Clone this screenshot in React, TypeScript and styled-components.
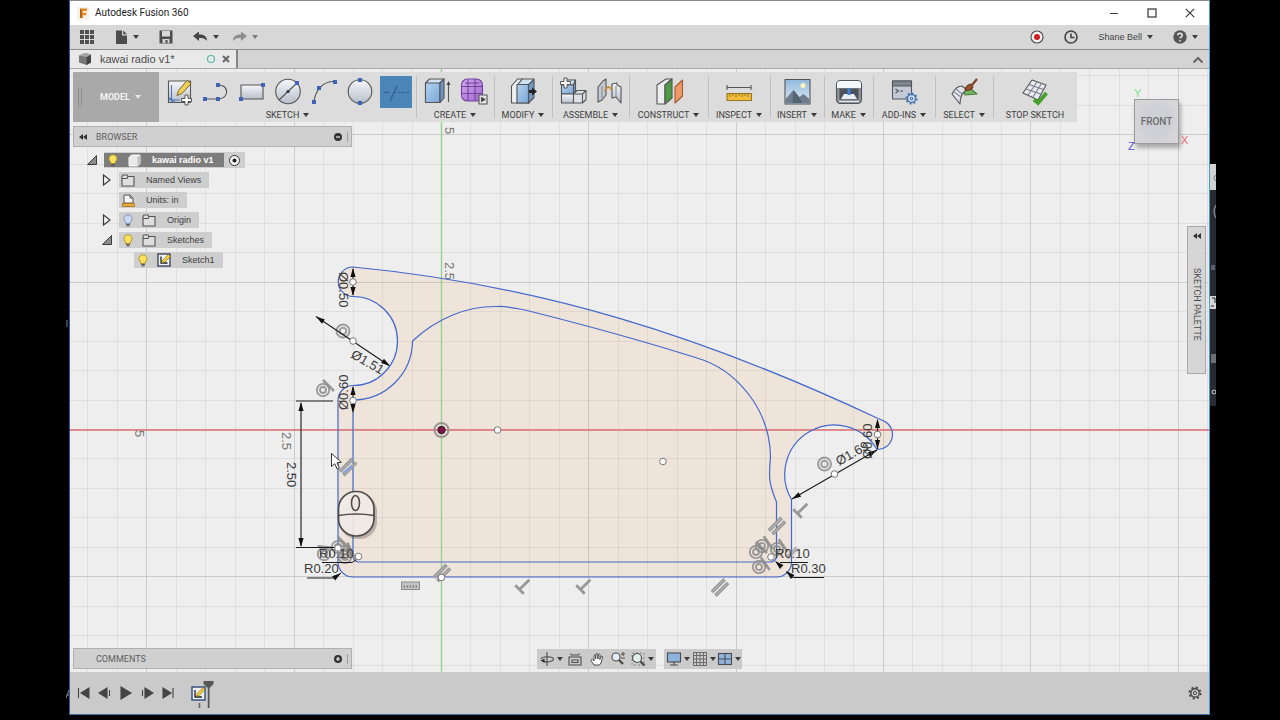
import React from 'react';
import styled, { createGlobalStyle } from 'styled-components';

const UI = '"Liberation Sans", Arial, sans-serif';
const CAPS = 'Roboto, "Liberation Sans", sans-serif';

const GlobalStyle = createGlobalStyle`
  *, *::before, *::after { box-sizing: border-box; }
  body { margin: 0; background: #000; font-family: ${UI}; color: #444; }
  button { font: inherit; color: inherit; background: none; border: 0; padding: 0; margin: 0; cursor: default; }
  ul { list-style: none; margin: 0; padding: 0; }
  svg { display: block; flex: none; }
`;

const Desktop = styled.div`
  display: flex;
  min-height: 100vh;
  padding-bottom: 5px;
  background: #000;
`;
const Gutter = styled.div<{ $w: number; $top: number; $end?: boolean }>`
  flex: none;
  width: ${p => p.$w}px;
  padding-top: ${p => p.$top}px;
  display: flex;
  justify-content: ${p => (p.$end ? 'flex-end' : 'flex-start')};
  align-items: flex-start;
`;
const AppWindow = styled.main`
  flex: 1;
  min-width: 0;
  display: flex;
  flex-direction: column;
  border: 1px solid #3c6ea8;
  border-top-color: #8a8a8a;
  border-left-color: #2c56a0;
  border-right-color: #4a9bdc;
  background: #eee;
`;

const TitleBar = styled.header`
  height: 24px;
  display: flex;
  align-items: center;
  background: #fff;
  padding: 0 12px 0 7px;
`;
const Title = styled.h1`
  flex: 1;
  margin: 0 0 0 6px;
  font: 400 10px/14px ${CAPS};
  color: #222;
`;
const WindowButtons = styled.div`
  display: flex;
  gap: 24px;
`;
const IconButton = styled.button<{ $w?: number }>`
  display: flex;
  align-items: center;
  justify-content: center;
  gap: 5px;
  min-width: ${p => p.$w ?? 14}px;
  height: 20px;
`;

const QuickBar = styled.nav`
  height: 25px;
  display: flex;
  align-items: center;
  background: #d7d7d7;
  border-bottom: 1px solid #8f8f8f;
  padding: 0 11px 0 9px;
  font-size: 9px;
`;
const QuickLeft = styled.div`
  flex: 1;
  display: flex;
  gap: 20px;
`;
const UndoPair = styled.div`
  display: flex;
  gap: 13px;
`;
const QuickRight = styled.div`
  display: flex;
  align-items: center;
  gap: 20px;
`;
const caretColors = { dark: '#3c3c3c', soft: '#7a7a7a', light: '#e8e8e8' };
const Caret = styled.span<{ $tone?: keyof typeof caretColors }>`
  width: 0;
  height: 0;
  flex: none;
  border: solid transparent;
  border-width: 4px 3px 0;
  border-top-color: ${p => caretColors[p.$tone ?? 'dark']};
`;

const TabStrip = styled.div`
  height: 19px;
  display: flex;
  align-items: stretch;
  justify-content: space-between;
  background: #d4d4d4;
  border-bottom: 1px solid #a9a9a9;
  padding-right: 4px;
`;
const Tab = styled.div`
  width: 168px;
  display: flex;
  align-items: center;
  background: #e9e9e9;
  border-right: 2px solid #858585;
  padding: 0 0 0 8px;
`;
const TabName = styled.span`
  flex: 1;
  margin-left: 8px;
  font-size: 11px;
  line-height: 16px;
  color: #4b4b4b;
`;

const Viewport = styled.section`
  position: relative;
  flex: 1;
  display: flex;
  flex-direction: column;
  padding: 3px 3px 3px;
  background: #eee;
  overflow: hidden;
`;
const Drawing = styled.svg`
  position: absolute;
  inset: 0;
  width: 100%;
  height: 100%;
`;
const Toolbar = styled.div`
  position: relative;
  align-self: flex-start;
  display: flex;
  height: 50px;
  background: #dcdcdc;
  font-family: ${CAPS};
`;
const Workspace = styled.button`
  width: 86px;
  display: flex;
  align-items: center;
  gap: 5px;
  padding-left: 5px;
  background: #a9a9a9;
  color: #f4f4f4;
  font: 700 9px/12px ${CAPS};
`;
const Grip = styled.span`
  width: 4px;
  height: 20px;
  margin-right: 13px;
  border: solid #8e8e8e;
  border-width: 0 1px;
`;
const Group = styled.div<{ $w: number }>`
  width: ${p => p.$w}px;
  padding: 4px 0 1px;
  display: flex;
  flex-direction: column;
  align-items: center;
  justify-content: space-between;
  & + & { background: linear-gradient(#c0c0c0, #c0c0c0) left center / 1px 42px no-repeat; }
`;
const Tools = styled.div`
  display: flex;
  gap: 4px;
`;
const Tool = styled.button<{ $on?: boolean }>`
  width: 32px;
  height: 32px;
  background: ${p => (p.$on ? '#4b84b6' : 'transparent')};
`;
const GroupLabel = styled.button`
  display: flex;
  align-items: center;
  gap: 4px;
  font-size: 9px;
  line-height: 12px;
  color: #404040;
  white-space: nowrap;
`;

const Middle = styled.div`
  position: relative;
  flex: 1;
  display: flex;
  justify-content: space-between;
  align-items: flex-start;
  padding-top: 4px;
`;
const PanelHeader = styled.div`
  width: 279px;
  height: 21px;
  display: flex;
  align-items: center;
  padding: 0 2px 0 4px;
  background: #d0d0d0;
  border: 1px solid #b0b0b0;
  font: 400 9px/12px ${CAPS};
  color: #5e5e5e;
`;
const PanelName = styled.span`
  flex: 1;
  margin-left: 8px;
`;
const PanelLead = styled.span`
  width: 10px;
`;
const Tree = styled.ul`
  padding-top: 3px;
  font-size: 9px;
  line-height: 12px;
`;
const TreeRow = styled.li<{ $level: number }>`
  height: 20px;
  display: flex;
  align-items: center;
  gap: 6px;
  padding-left: ${p => 13 + p.$level * 15}px;
`;
const Twisty = styled.button`
  width: 12px;
  height: 14px;
`;
const Chip = styled.span<{ $root?: boolean }>`
  height: 16px;
  display: flex;
  align-items: center;
  background: #cecece;
  color: #404040;
  padding-right: ${p => (p.$root ? 4 : 8)}px;
`;
const RootName = styled.span`
  height: 14px;
  display: flex;
  align-items: center;
  padding-right: 10px;
  margin-right: 4px;
  background: #7d7d7d;
  color: #fff;
  font-weight: 700;
`;
const Slot = styled.span`
  width: 18px;
  margin-right: 3px;
  display: flex;
  justify-content: center;
`;
const NodeName = styled.span`
  margin-left: 6px;
`;

const Palette = styled.button`
  width: 19px;
  margin-top: 100px;
  padding: 5px 0 32px;
  display: flex;
  flex-direction: column;
  align-items: center;
  gap: 28px;
  background: #d6d6d6;
  border: 1px solid #aaa;
`;
const PaletteName = styled.span`
  writing-mode: vertical-rl;
  font: 400 9px/12px ${CAPS};
  color: #4a4a4a;
`;

const ViewCube = styled.div`
  position: absolute;
  right: 30px;
  top: 30px;
  width: 45px;
  height: 45px;
  display: flex;
  align-items: center;
  justify-content: center;
  background: radial-gradient(closest-side, #cfcfd6 70%, #d6d6d9);
  border: 1px solid #9a9a9a;
  box-shadow: 2px 4px 4px rgba(0, 0, 0, 0.28);
  font: 500 10px/14px ${CAPS};
  color: #6d6d6d;
`;
const AxisName = styled.span<{ $x: number; $y: number; $c: string }>`
  position: absolute;
  left: ${p => p.$x}px;
  top: ${p => p.$y}px;
  font: 400 11px/12px ${UI};
  color: ${p => p.$c};
`;

const BottomRow = styled.div`
  position: relative;
  display: grid;
  grid-template-columns: 1fr auto 1fr;
  align-items: center;
`;
const NavBars = styled.div`
  display: flex;
  gap: 8px;
`;
const NavBar = styled.div`
  height: 20px;
  display: flex;
  align-items: center;
  background: #cbcbcb;
  padding: 0 1px;
`;
const NavButton = styled.button<{ $w: number }>`
  width: ${p => p.$w}px;
  display: flex;
  align-items: center;
  justify-content: center;
  gap: 2px;
`;

const Timeline = styled.footer`
  height: 42px;
  display: flex;
  align-items: center;
  background: #cacaca;
  padding: 0 7px;
`;
const Playback = styled.div`
  display: flex;
  gap: 7px;
`;
const History = styled.div`
  flex: 1;
  padding-left: 16px;
`;

/* ---------- toolbar glyphs ---------- */

const Defs = styled.svg`
  position: absolute;
`;
const Gradients = () => (
  <Defs width="0" height="0" aria-hidden>
    <defs>
      <linearGradient id="steel" x1="0" y1="0" x2="0" y2="1">
        <stop offset="0" stopColor="#f6f7fa" />
        <stop offset="1" stopColor="#b7bfcb" />
      </linearGradient>
      <linearGradient id="blue" x1="0" y1="0" x2="1" y2="1">
        <stop offset="0" stopColor="#b4d2f0" />
        <stop offset="1" stopColor="#7ba6d6" />
      </linearGradient>
      <linearGradient id="violet" x1="0" y1="0" x2="1" y2="1">
        <stop offset="0" stopColor="#d3a8ee" />
        <stop offset="1" stopColor="#a268cf" />
      </linearGradient>
      <linearGradient id="sky" x1="0" y1="0" x2="0" y2="1">
        <stop offset="0" stopColor="#8fb9dc" />
        <stop offset="1" stopColor="#e2edf4" />
      </linearGradient>
    </defs>
  </Defs>
);

const Dot = ({ x, y }: { x: number; y: number }) => (
  <rect x={x - 2} y={y - 2} width="4" height="4" fill="#3d63b4" stroke="none" />
);
const Ico = ({ children }: { children: React.ReactNode }) => (
  <svg width="32" height="32" viewBox="0 0 32 32" fill="none" stroke="#555" strokeWidth="1.1" strokeLinejoin="round">
    {children}
  </svg>
);

const icons: Record<string, React.ReactNode> = {
  newSketch: (
    <Ico>
      <rect x="4.500" y="5" width="22" height="21.500" fill="url(#steel)" />
      <path d="M7.500 9v15h8" stroke="#5277b5" />
      <path d="M5 22l5 4" stroke="#5277b5" strokeWidth="2" />
      <path d="M23 4.500l4 3-9 10-5 2 1.500-5z" fill="#f2cf55" stroke="#7a642a" strokeWidth="1" />
      <path d="M21 19h3v3.500h3.500v3h-3.500v3.500h-3v-3.500h-3.500v-3h3.500z" fill="#fff" strokeWidth="1" />
    </Ico>
  ),
  line: (
    <Ico>
      <path d="M5 23H18M18 9c11-1 12 14 0 14" />
      <Dot x={5} y={23} /><Dot x={18} y={23} /><Dot x={18} y={9} />
    </Ico>
  ),
  rect: (
    <Ico>
      <rect x="5" y="9" width="22" height="14" fill="url(#steel)" />
      <Dot x={5} y={23} /><Dot x={27} y={9} />
    </Ico>
  ),
  circle: (
    <Ico>
      <circle cx="16" cy="15.500" r="12.300" fill="url(#steel)" />
      <path d="M7 24L25 7" />
      <Dot x={25} y={7} /><circle cx="16" cy="15.500" r="1.600" fill="#333" stroke="none" />
    </Ico>
  ),
  arc: (
    <Ico>
      <path d="M6 26C7 14 15 5 27 5.500" />
      <Dot x={6} y={26} /><Dot x={11} y={12} /><Dot x={27} y={6} />
    </Ico>
  ),
  circle2: (
    <Ico>
      <circle cx="16" cy="15.500" r="11.800" fill="url(#steel)" />
      <Dot x={16} y={4} /><Dot x={16} y={27} />
    </Ico>
  ),
  trim: (
    <Ico>
      <path d="M4 16.500h5M10 25l7-15" stroke="#2b5f92" />
      <path d="M13 16.500h16" stroke="#2b5f92" strokeDasharray="3 1.500" />
    </Ico>
  ),
  extrude: (
    <Ico>
      <path d="M4.500 7l4-4H23l-4 4v19.500H4.500z" fill="#cfe2f5" />
      <rect x="4.500" y="7" width="14.500" height="19.500" fill="url(#blue)" />
      <path d="M19 7l4-4v19l-4 4.500z" fill="#6e93c2" />
      <path d="M27.500 26V8" /><path d="M27.500 5l-2 4h4z" fill="#444" stroke="none" />
    </Ico>
  ),
  form: (
    <Ico>
      <rect x="4.500" y="3" width="21" height="22" rx="6" fill="url(#violet)" stroke="#75429f" />
      <path d="M11 4v21M18 3v22M4.500 10.500h21M4.500 17.500h21M8 7h14" stroke="#75429f" />
      <rect x="22" y="19" width="8" height="9" fill="#e4e4e4" />
      <path d="M24.500 21.500l3.500 2-3.500 2z" fill="#333" />
    </Ico>
  ),
  pressPull: (
    <Ico>
      <path d="M4.500 10l6-7h5l-5 6v18h-6z" fill="#eef0f4" />
      <path d="M10.500 9l5-6H27l-5 6v18H10.500z" fill="#cfe2f5" />
      <rect x="10" y="8.500" width="11.500" height="18.500" fill="url(#blue)" />
      <path d="M21.500 8.500L27 3.500v18L21.500 27z" fill="#7198c8" />
      <path d="M22 14h3v-2.500l5 4-5 4V17h-3z" fill="#222" stroke="none" />
    </Ico>
  ),
  component: (
    <Ico>
      <path d="M5 9l3-5h10.500l-2 5z" fill="#cfe2f5" />
      <rect x="4.500" y="9" width="12" height="9" fill="url(#blue)" />
      <path d="M16.500 9l2-5v11l-2 3z" fill="#7da2cf" />
      <rect x="4.500" y="18" width="12" height="9" fill="url(#steel)" />
      <path d="M16.500 18l3.500-3.500h9v9l-3.500 3.500h-9z" fill="#dde1e8" />
      <path d="M25.500 27v-9h-9M25.500 18l3.500-3.500" />
      <path d="M7 2h3v3.500h3.500v3H10V12H7V8.500H3.500v-3H7z" fill="#fff" strokeWidth="1" />
    </Ico>
  ),
  joint: (
    <Ico>
      <path d="M5 11l5-6 3-2v16l-4 5-4 2z" fill="#c3c8d1" />
      <path d="M9 10v14" stroke="#868c98" />
      <path d="M28 11l-4-2V7l-5 1v14l4-1 5 6z" fill="url(#steel)" />
      <path d="M23 10v11" stroke="#868c98" />
      <path d="M12 15c2-5 4-5 7-1" stroke="#c58b3a" strokeWidth="2" />
    </Ico>
  ),
  plane: (
    <Ico>
      <path d="M4 9l9-6h6l-7 6v19H4z" fill="#eceef2" />
      <path d="M12 9l7-6v19l-7 6z" fill="#4e9a46" />
      <path d="M22 11l7.500-7v16L22 27z" fill="#eb9a68" stroke="#a65a30" />
    </Ico>
  ),
  measure: (
    <Ico>
      <path d="M4 11.500h24M4 9v5M28 9v5" />
      <rect x="4" y="17.500" width="24.500" height="7" fill="#f0be3c" stroke="#9c7420" />
      <path d="M7 18v3M10 18v2M13 18v3M16 18v2M19 18v3M22 18v2M25 18v3" stroke="#9c7420" strokeWidth="1" />
    </Ico>
  ),
  image: (
    <Ico>
      <rect x="4" y="3.500" width="25" height="24.500" fill="url(#sky)" />
      <path d="M4.500 23l8-9 6 7 4-3 6 5v4.500h-24z" fill="#6e7c8e" stroke="none" />
      <path d="M12.500 14l6 8 3 5h-10z" fill="#566373" stroke="none" />
      <circle cx="22" cy="9.500" r="2.500" fill="#fff6bf" stroke="none" />
    </Ico>
  ),
  printer: (
    <Ico>
      <rect x="3.500" y="4.500" width="25" height="23" rx="4" fill="#8a919b" />
      <path d="M4 12V8q0-3 3-3h18q3 0 3 3v4z" fill="#f6f7f8" stroke="none" />
      <rect x="7" y="13" width="18" height="10" fill="#4b525c" />
      <path d="M8 23l3-5h10l3 5z" fill="#e8edf3" stroke="none" />
      <path d="M16 12v7" stroke="#3d7fd0" strokeWidth="3" />
      <path d="M6 25.500h20" stroke="#e9e9e9" />
    </Ico>
  ),
  addins: (
    <Ico>
      <rect x="4.500" y="5" width="19" height="18" fill="#c2cad8" />
      <rect x="4.500" y="5" width="19" height="5" fill="#7d8693" />
      <path d="M7.500 13l3 2-3 2M12 15h3" />
      <circle cx="23.500" cy="22.500" r="4" fill="#d6e6f7" stroke="#4a76ad" strokeWidth="1.500" />
      <circle cx="23.500" cy="22.500" r="5.200" stroke="#4a76ad" strokeWidth="1.800" strokeDasharray="2 2" />
      <circle cx="23.500" cy="22.500" r="1.300" stroke="#4a76ad" />
    </Ico>
  ),
  select: (
    <Ico>
      <path d="M14 14l9-1 6 5-12 1z" fill="#6fb35f" stroke="#48803c" />
      <path d="M4 18q4-8 10-8l5 4q-7 3-7 14z" fill="#e1e4ea" />
      <path d="M8 13l6 5M6 16l7 5" stroke="#8d929c" />
      <path d="M17 14q1-5 6-6l2 3q-2 4-8 3z" fill="#a0522d" stroke="#6b3418" />
      <path d="M24 9l5-6" stroke="#7c4324" strokeWidth="2.200" />
    </Ico>
  ),
  finish: (
    <Ico>
      <path d="M13 4l14 5-8 15L4 17z" fill="#e9ebf0" />
      <path d="M18 6L9 19M22.500 7.500L14 21M10 8.500l14.500 5M7 13l15 5" stroke="#777d8a" />
      <path d="M15 23.500l4 3.500 8.500-10" stroke="#4aa02c" strokeWidth="4" strokeLinejoin="miter" />
    </Ico>
  ),
};

type GroupDef = { w: number; label: string; menu: boolean; tools: [string, string][]; active?: string };
const groups: GroupDef[] = [
  { w: 257, label: 'SKETCH', menu: true, active: 'trim', tools: [['newSketch', 'Create sketch'], ['line', 'Line'], ['rect', 'Rectangle'], ['circle', 'Center circle'], ['arc', 'Arc'], ['circle2', 'Two-point circle'], ['trim', 'Trim']] },
  { w: 78, label: 'CREATE', menu: true, tools: [['extrude', 'Extrude'], ['form', 'Create form']] },
  { w: 58, label: 'MODIFY', menu: true, tools: [['pressPull', 'Press pull']] },
  { w: 77, label: 'ASSEMBLE', menu: true, tools: [['component', 'New component'], ['joint', 'Joint']] },
  { w: 79, label: 'CONSTRUCT', menu: true, tools: [['plane', 'Offset plane']] },
  { w: 62, label: 'INSPECT', menu: true, tools: [['measure', 'Measure']] },
  { w: 54, label: 'INSERT', menu: true, tools: [['image', 'Insert canvas']] },
  { w: 49, label: 'MAKE', menu: true, tools: [['printer', '3D print']] },
  { w: 62, label: 'ADD-INS', menu: true, tools: [['addins', 'Scripts and add-ins']] },
  { w: 58, label: 'SELECT', menu: true, tools: [['select', 'Paint select']] },
  { w: 84, label: 'STOP SKETCH', menu: false, tools: [['finish', 'Stop sketch']] },
];

/* ---------- tree glyphs ---------- */

const Bulb = ({ off }: { off?: boolean }) => (
  <svg width="10" height="13" viewBox="0 0 10 13">
    <path d="M5 .7a4 4 0 0 1 2.300 7.300v1.500H2.700V8A4 4 0 0 1 5 .7z" fill={off ? '#c9daf2' : '#fbe25a'} stroke={off ? '#7b8fb0' : '#a58f2a'} strokeWidth=".9" />
    <path d="M3 10.500h4M3.500 12h3" stroke="#555" strokeWidth="1.100" />
  </svg>
);
const Folder = () => (
  <svg width="14" height="13" viewBox="0 0 14 13" fill="#dedede" stroke="#555" strokeWidth="1.100">
    <path d="M1 12V2.500L2 1h4l1 1.500h6V12z" /><path d="M1 4.500h5l1-2" fill="none" />
  </svg>
);
const BodyCube = () => (
  <svg width="13" height="13" viewBox="0 0 13 13">
    <path d="M1 3.500L3.500 1H12v8.500L9.500 12H1z" fill="#e9e9e9" stroke="#fafafa" />
    <path d="M9.500 3.500L12 1v8.500L9.500 12z" fill="#c2c2c2" />
  </svg>
);
const UnitsIcon = () => (
  <svg width="13" height="13" viewBox="0 0 13 13">
    <path d="M2 9V1h6l3 3v5z" fill="#f5f5f5" stroke="#555" /><path d="M8 1v3h3" fill="none" stroke="#555" />
    <rect x=".5" y="9.500" width="12" height="3" fill="#e9a83a" stroke="#a8741c" strokeWidth=".8" />
  </svg>
);
const SketchIcon = () => (
  <svg width="14" height="14" viewBox="0 0 14 14">
    <rect x="1" y="1" width="12" height="12" fill="#eef1f6" stroke="#2e3a52" strokeWidth="1.300" />
    <path d="M4 3.500V10h6.500" fill="none" stroke="#222" strokeWidth="1.300" />
    <path d="M4.500 10l1.200-3L11.500 1.500l2 1.800L8 9z" fill="#f1cc34" stroke="#7b6516" strokeWidth=".6" />
  </svg>
);
const Arrow = ({ open }: { open?: boolean }) => (
  <svg width="12" height="14" viewBox="0 0 12 14">
    {open
      ? <path d="M10.500 2.500v9h-9z" fill="#8c8c8c" stroke="#3c3c3c" />
      : <path d="M2.500 2l6.500 5-6.500 5z" fill="#f2f2f2" stroke="#3c3c3c" strokeWidth="1.200" />}
  </svg>
);
const Collapse = () => (
  <svg width="10" height="8" viewBox="0 0 10 8"><path d="M5 1v6L1 4zM9 1v6L5 4z" fill="#333" /></svg>
);
const RoundSign = ({ plus }: { plus?: boolean }) => (
  <svg width="16" height="12" viewBox="0 0 16 12">
    <circle cx="5" cy="6" r="4" fill="#333" />
    <path d={plus ? 'M3 6h4M5 4v4' : 'M3 6h4'} stroke="#eee" strokeWidth="1.200" />
    <path d="M14.500 1.500v9" stroke="#999" />
  </svg>
);

const nodes = [
  { level: 1, arrow: 'closed', name: 'Named Views', marks: [<Folder key="f" />] },
  { level: 1, arrow: '', name: 'Units: in', marks: [<UnitsIcon key="u" />] },
  { level: 1, arrow: 'closed', name: 'Origin', marks: [<Bulb key="b" off />, <Folder key="f" />] },
  { level: 1, arrow: 'open', name: 'Sketches', marks: [<Bulb key="b" />, <Folder key="f" />] },
  { level: 2, arrow: '', name: 'Sketch1', marks: [<Bulb key="b" />, <SketchIcon key="s" />] },
];

/* ---------- sketch canvas ---------- */

const OUTLINE =
  'M353 267C540 285 700 335 877 418L884 421A15 15 0 0 1 877 449.500A49.500 49.500 0 0 0 791.500 499.500V562A15 15 0 0 1 776.500 577H353A15 15 0 0 1 338 562V400A15 15 0 0 1 353 385.500A44.500 44.500 0 0 0 353 296.500A14.700 14.700 0 0 1 353 267Z';
const OFFSET =
  'M353 400A59.500 59.500 0 0 0 412.500 341C437 318 467 306 497 306.500C507 306 515 308 525 310C585 325 640 340 697 358C735 369 770 408 770.500 457C768.500 478 769 484 776.500 502V556A6 6 0 0 1 770.500 562H359A6 6 0 0 1 353 556Z';

const Tip = ({ x, y, a }: { x: number; y: number; a: number }) => (
  <path d="M0 0L-9 -2.600V2.600Z" fill="#111" transform={`translate(${x} ${y}) rotate(${a})`} />
);
const Node = ({ x, y }: { x: number; y: number }) => (
  <circle cx={x} cy={y} r="3.300" fill="#fff" stroke="#777" />
);
const Dim = ({ x, y, a = 0, children }: { x: number; y: number; a?: number; children: string }) => (
  <text x="0" y="0" transform={`translate(${x} ${y}) rotate(${a})`}>{children}</text>
);
const Concentric = ({ x, y }: { x: number; y: number }) => (
  <g fill="none" stroke="#8e8e8e" strokeOpacity=".85">
    <circle cx={x} cy={y} r="6.500" strokeWidth="2" /><circle cx={x} cy={y} r="3.300" strokeWidth="2" />
  </g>
);
const Tangent = ({ x, y, a = 0 }: { x: number; y: number; a?: number }) => (
  <g transform={`translate(${x} ${y}) rotate(${a})`} fill="none" stroke="#8a8a8a" strokeOpacity=".85" strokeWidth="1.800">
    <circle r="6.200" /><circle r="3" /><path d="M0 -10L11 1" strokeWidth="2.600" />
  </g>
);
const Parallel = ({ x, y }: { x: number; y: number }) => (
  <g transform={`translate(${x} ${y}) rotate(-45)`} stroke="#989898" strokeWidth="3.600">
    <path d="M-9 -2.500H9M-9 2.500H9" /><path d="M-8 -2.500H8M-8 2.500H8" stroke="#b4b4b4" strokeWidth="1" />
  </g>
);
const Perp = ({ x, y }: { x: number; y: number }) => (
  <g transform={`translate(${x} ${y}) rotate(-45)`} stroke="#989898" strokeWidth="2.800">
    <path d="M-5 -6V6M-5 0H9" fill="none" />
  </g>
);

const STEP = 29.46;
const lines = Array.from({ length: 60 }, (_, i) => i - 30);

const SketchCanvas = () => (
  <Drawing viewBox="70 69 1139 603" preserveAspectRatio="xMidYMid slice" role="img" aria-label="Sketch profile with dimensions">
    <path d={OUTLINE} fill="#efe4da" />
    <g strokeWidth="1">
      {lines.map(i => (
        <path key={`v${i}`} d={`M${Math.round(441 + i * STEP) + 0.5} -400V1200`} stroke="#787878" strokeOpacity={i % 5 ? 0.13 : 0.28} />
      ))}
      {lines.map(i => (
        <path key={`h${i}`} d={`M-600 ${Math.round(430 + i * STEP) - 0.5}H2000`} stroke="#787878" strokeOpacity={i % 5 ? 0.13 : 0.28} />
      ))}
      <path d="M441.500 -400V1200" stroke="#93d290" strokeWidth="1.400" />
      <path d="M-600 430H2000" stroke="#dc6f74" strokeWidth="1.400" />
    </g>

    <g fontFamily="Liberation Sans, Arial, sans-serif" fontSize="13" fill="#777">
      <Dim x={445} y={127} a={90}>5</Dim>
      <Dim x={445} y={262} a={90}>2.5</Dim>
      <Dim x={282} y={432} a={90}>2.5</Dim>
      <Dim x={135} y={430} a={90}>5</Dim>
    </g>

    <g fill="none" stroke="#4468cc" strokeWidth="1.200">
      <path d={OUTLINE} />
      <path d={OFFSET} />
    </g>

    <Concentric x={343} y={331} />
    <Tangent x={323} y={390} />
    <Concentric x={824.500} y={464} />
    <Parallel x={348} y={467} />
    <path d="M343 473l9-7" stroke="#7ea2e6" strokeWidth="2" />
    <Parallel x={777} y={526} />
    <Parallel x={720} y={587.500} />
    <Parallel x={442} y={573} />
    <Perp x={523} y={586} />
    <Perp x={584} y={586} />
    <Perp x={801} y={510} />
    <g>
      <Tangent x={338} y={547} />
      <Tangent x={324} y={554} a={-40} />
      <Tangent x={345} y={557} a={10} />
      <Tangent x={344} y={552} a={20} />
      <Tangent x={762} y={546} a={10} />
      <Tangent x={756} y={552} />
      <Tangent x={777} y={549} a={10} />
      <Tangent x={759} y={567} a={10} />
      <path d="M787 558l10-10" stroke="#989898" strokeWidth="4" strokeOpacity=".7" />
    </g>
    <g fill="#c4c4c4" stroke="#8a8a8a">
      <rect x="401.500" y="582" width="18" height="7.500" />
      <path d="M403.500 586.500h14" stroke="#777" strokeDasharray="1.500 1.500" strokeWidth="2" />
    </g>

    <g stroke="#1a1a1a" strokeWidth="1.100" fill="none">
      <path d="M353 269V295M353 387V411M316 316.500L389 365.500M296 401H333M301 403V546M296 547.500H338M877.500 420V449M792 499L877 450" />
      <path d="M307 578H335L341 573M322 562.500H352L356 560M793 577.500H824M780 562.500H808M786 572L793 577.500M776 562L781 566" strokeWidth="1" />
    </g>
    <Tip x={353} y={268} a={-90} /><Tip x={353} y={296} a={90} />
    <Tip x={353} y={386} a={-90} /><Tip x={353} y={413} a={90} />
    <Tip x={316} y={316.500} a={214} /><Tip x={390} y={366} a={34} />
    <Tip x={301} y={402} a={-90} /><Tip x={301} y={547} a={90} />
    <Tip x={877.500} y={419} a={-90} /><Tip x={877.500} y={449} a={90} />
    <Tip x={792} y={499} a={150} /><Tip x={877} y={450} a={-30} />
    <Tip x={341} y={573} a={-36} /><Tip x={786} y={571} a={222} /><Tip x={775} y={561} a={222} />

    <g fontFamily="Liberation Sans, Arial, sans-serif" fontSize="13" fill="#3a3a3a">
      <Dim x={339} y={272} a={90}>Ø0.50</Dim>
      <Dim x={348} y={410} a={-90}>Ø0.60</Dim>
      <Dim x={350} y={357} a={30}>Ø1.51</Dim>
      <Dim x={839} y={466} a={-30}>Ø1.69</Dim>
      <Dim x={872} y={459} a={-90}>Ø0.60</Dim>
      <Dim x={287} y={462} a={90}>2.50</Dim>
      <Dim x={319} y={558}>R0.10</Dim>
      <Dim x={304} y={573}>R0.20</Dim>
      <Dim x={775} y={558}>R0.10</Dim>
      <Dim x={791} y={573}>R0.30</Dim>
    </g>

    <Node x={353} y={282} /><Node x={353} y={341} /><Node x={353} y={400.500} />
    <Node x={497.500} y={430} /><Node x={663} y={461.500} /><Node x={834.500} y={474} />
    <Node x={877.500} y={434.500} /><Node x={441.500} y={577.500} />
    <Node x={338} y={548} /><Node x={358.500} y={556.500} /><Node x={771} y={557} />
    <circle cx="441.500" cy="430" r="7" fill="none" stroke="#9a9590" strokeWidth="2" />
    <circle cx="441.500" cy="430" r="3.700" fill="#7c1748" stroke="#35152a" />

    <path d="M331.500 453.500v13l3.200-2.800 2.500 5.300 2.200-1-2.400-5.200 4.300-.5z" fill="#fff" stroke="#333" />

    <g>
      <rect x="340" y="494" width="37" height="45" rx="17" fill="#000" opacity=".22" />
      <rect x="338.500" y="491.500" width="35.500" height="44.500" rx="17.500" fill="#f3eeea" fillOpacity=".93" stroke="#504b49" strokeWidth="1.700" />
      <path d="M338.500 515.500q18-3 35.500 0" fill="none" stroke="#504b49" strokeWidth="1.500" />
      <ellipse cx="355.500" cy="503" rx="4" ry="7.500" fill="#ece7e3" stroke="#504b49" strokeWidth="1.600" />
    </g>
  </Drawing>
);

/* ---------- page ---------- */

const N = ({ children }: { children: React.ReactNode }) => (
  <svg width="16" height="16" viewBox="0 0 16 16" fill="none" stroke="#4c4c4c" strokeWidth="1.100">{children}</svg>
);

export default function App() {
  return (
    <Desktop>
      <GlobalStyle />
      <Gradients />
      <Gutter $w={69} $top={320} $end>
        <svg width="3" height="380" viewBox="0 0 3 380" aria-hidden>
          <rect x="0" y="0" width="2" height="7" fill="#3a4354" />
          <path d="M0 378l3-8M1 375h2" stroke="#8c8c8c" />
        </svg>
      </Gutter>

      <AppWindow>
        <TitleBar>
          <svg width="12" height="13" viewBox="0 0 12 13" aria-hidden>
            <rect width="12" height="13" fill="#f4f0ea" />
            <path d="M3 11V1.500h7v2.600H6v1.600h3.300v2.500H6V11z" fill="#e58a25" />
            <path d="M3 11V1.500l1.500 1V11z" fill="#a85a10" />
          </svg>
          <Title>Autodesk Fusion 360</Title>
          <WindowButtons>
            <IconButton aria-label="Minimize"><svg width="10" height="10" viewBox="0 0 10 10"><path d="M1 5.500h8" stroke="#444" /></svg></IconButton>
            <IconButton aria-label="Maximize"><svg width="10" height="10" viewBox="0 0 10 10"><rect x="1" y="1" width="8" height="8" fill="none" stroke="#333" strokeWidth="1.200" /></svg></IconButton>
            <IconButton aria-label="Close"><svg width="10" height="10" viewBox="0 0 10 10"><path d="M.8.8l8.400 8.400M9.200.8L.8 9.200" stroke="#333" strokeWidth="1.100" /></svg></IconButton>
          </WindowButtons>
        </TitleBar>

        <QuickBar aria-label="Quick access">
          <QuickLeft>
            <IconButton aria-label="Data panel" $w={16}>
              <svg width="15" height="15" viewBox="0 0 15 15" fill="#505050">
                {[0, 5, 10].map(x => [0, 5, 10].map(y => <rect key={`${x}-${y}`} x={x} y={y} width="4" height="4" />))}
              </svg>
            </IconButton>
            <IconButton aria-label="File">
              <svg width="13" height="14" viewBox="0 0 13 14"><path d="M1 .5h6v5h5V14H1z" fill="#4c4c4c" /><path d="M8.200.5L12 4.300H8.200z" fill="#4c4c4c" /></svg>
              <Caret />
            </IconButton>
            <IconButton aria-label="Save">
              <svg width="14" height="14" viewBox="0 0 14 14"><path d="M.5.5h13v13H.5z" fill="#4c4c4c" /><path d="M3 1h8v5.500H3zM3.500 9h7v4h-2v-3h-2v3h-3z" fill="#d7d7d7" /></svg>
            </IconButton>
            <UndoPair>
              <IconButton aria-label="Undo">
                <svg width="15" height="12" viewBox="0 0 15 12"><path d="M0 5L6 .5v3c5 0 8 1.500 8 6.500-2-2.500-4-3-8-3v3z" fill="#454545" /></svg>
                <Caret />
              </IconButton>
              <IconButton aria-label="Redo">
                <svg width="15" height="12" viewBox="0 0 15 12"><path d="M15 5L9 .5v3C4 3.500 1 5 1 10c2-2.500 4-3 8-3v3z" fill="#8d8d8d" /></svg>
                <Caret $tone="soft" />
              </IconButton>
            </UndoPair>
          </QuickLeft>
          <QuickRight>
            <IconButton aria-label="Record"><svg width="14" height="14" viewBox="0 0 14 14"><circle cx="7" cy="7" r="6" fill="#f4f4f4" stroke="#555" strokeWidth="1.200" /><circle cx="7" cy="7" r="3" fill="#d01c24" /></svg></IconButton>
            <IconButton aria-label="Job status"><svg width="14" height="14" viewBox="0 0 14 14" fill="none" stroke="#444" strokeWidth="1.600"><circle cx="7" cy="7" r="6" /><path d="M7 3.500V7.500h3.500" /></svg></IconButton>
            <IconButton $w={54}>Shane Bell<Caret /></IconButton>
            <IconButton aria-label="Help">
              <svg width="14" height="14" viewBox="0 0 14 14"><circle cx="7" cy="7" r="6.700" fill="#555" /><path d="M4.800 5.400c.2-3 4.600-2.700 4.400 0 0 1.500-2.100 1.500-2.100 3.100M7.100 10v1.500" fill="none" stroke="#eee" strokeWidth="1.500" /></svg>
              <Caret />
            </IconButton>
          </QuickRight>
        </QuickBar>

        <TabStrip>
          <Tab>
            <svg width="14" height="14" viewBox="0 0 14 14" aria-hidden><path d="M1 3.500L7 1l6 1.500v8L8.500 13 1 10.500z" fill="#777" /><path d="M8.500 5L13 2.500v8L8.500 13z" fill="#444" /><path d="M1 3.500L7 1l6 1.500L8.500 5z" fill="#a4a4a4" /></svg>
            <TabName>kawai radio v1*</TabName>
            <svg width="10" height="10" viewBox="0 0 10 10" aria-hidden><circle cx="5" cy="5" r="3.500" fill="none" stroke="#5cb8a0" strokeWidth="1.200" /></svg>
            <IconButton aria-label="Close tab" $w={20}><svg width="8" height="8" viewBox="0 0 8 8"><path d="M1 1l6 6M7 1L1 7" stroke="#666" strokeWidth="2" /></svg></IconButton>
          </Tab>
          <IconButton aria-label="Hide toolbar"><svg width="12" height="8" viewBox="0 0 12 8"><path d="M1.500 6.500L6 2l4.500 4.500" fill="none" stroke="#666" strokeWidth="2" /></svg></IconButton>
        </TabStrip>

        <Viewport>
          <SketchCanvas />

          <Toolbar role="toolbar">
            <Workspace><Grip />MODEL<Caret $tone="light" /></Workspace>
            {groups.map(g => (
              <Group key={g.label} $w={g.w}>
                <Tools>
                  {g.tools.map(([id, name]) => (
                    <Tool key={id} aria-label={name} $on={g.active === id}>{icons[id]}</Tool>
                  ))}
                </Tools>
                <GroupLabel>{g.label}{g.menu && <Caret />}</GroupLabel>
              </Group>
            ))}
          </Toolbar>

          <Middle>
            <div>
              <PanelHeader>
                <PanelLead><Collapse /></PanelLead>
                <PanelName>BROWSER</PanelName>
                <button aria-label="Collapse browser"><RoundSign /></button>
              </PanelHeader>
              <Tree>
                <TreeRow $level={0}>
                  <Twisty aria-label="Toggle root"><Arrow open /></Twisty>
                  <Chip $root>
                    <RootName>
                      <Slot><Bulb /></Slot><Slot><BodyCube /></Slot><NodeName>kawai radio v1</NodeName>
                    </RootName>
                    <svg width="13" height="13" viewBox="0 0 13 13" aria-hidden><circle cx="6.500" cy="6.500" r="5" fill="#f4f4f4" stroke="#333" /><circle cx="6.500" cy="6.500" r="2" fill="#222" /></svg>
                  </Chip>
                </TreeRow>
                {nodes.map(n => (
                  <TreeRow key={n.name} $level={n.level}>
                    <Twisty aria-label={`Toggle ${n.name}`}>{n.arrow && <Arrow open={n.arrow === 'open'} />}</Twisty>
                    <Chip>
                      {n.marks.map((m, i) => <Slot key={i}>{m}</Slot>)}
                      <NodeName>{n.name}</NodeName>
                    </Chip>
                  </TreeRow>
                ))}
              </Tree>
            </div>
            <Palette>
              <Collapse />
              <PaletteName>SKETCH PALETTE</PaletteName>
            </Palette>
          </Middle>

          <BottomRow>
            <PanelHeader>
              <PanelLead />
              <PanelName>COMMENTS</PanelName>
              <button aria-label="Expand comments"><RoundSign plus /></button>
            </PanelHeader>
            <NavBars>
              <NavBar>
                <NavButton $w={26} aria-label="Orbit"><N><path d="M8 1v14" /><path d="M2 8c1-3 12-3 12.500 0S6 11.500 4 10" /><path d="M1.500 9.500l4-2v4.500z" fill="#333" stroke="none" /></N><Caret /></NavButton>
                <NavButton $w={22} aria-label="Look at"><N><path d="M2 6h12v8H2zM5 9h6v2.500H5z" /><path d="M4 4V2.500M12 4V2.500M4 4h8" /></N></NavButton>
                <NavButton $w={22} aria-label="Pan"><N><path d="M5 14L2 9.500q0-1.500 1.500-1L5 10V4.500q.8-1.500 1.600 0V8L7 3q1-1.500 1.800 0V8l.7-4.500q1-1 1.600.2L10.800 8.500l1.300-3q1.300-.8 1.500.5L12 12l-1.500 2z" fill="#fff" strokeWidth="1" /></N></NavButton>
                <NavButton $w={20} aria-label="Zoom"><N><circle cx="6" cy="6" r="4" fill="#e6eef5" /><path d="M9 9l4 4" strokeWidth="2.400" /><path d="M11 3h4M13 1v4M11 7h4" strokeWidth="1" /></N></NavButton>
                <NavButton $w={27} aria-label="Fit"><N><rect x="2" y="2" width="12" height="12" stroke="#888" strokeDasharray="2 2" strokeWidth="1" /><circle cx="7" cy="7" r="4.500" fill="#dfeee6" /><path d="M10.500 10.500l4 4" strokeWidth="2.400" /></N><Caret /></NavButton>
              </NavBar>
              <NavBar>
                <NavButton $w={26} aria-label="Display settings"><N><rect x="1.500" y="2" width="13" height="9" fill="#8fb3de" /><path d="M4 14h8M8 11v3" /></N><Caret /></NavButton>
                <NavButton $w={26} aria-label="Grid settings"><N><path d="M1.500 1.500h13v13h-13zM4.500 2v12M8 2v12M11.500 2v12M2 4.500h12M2 8h12M2 11.500h12" stroke="#6a6a6a" strokeWidth="1" /></N><Caret /></NavButton>
                <NavButton $w={24} aria-label="Viewports"><N><rect x="1.500" y="2.500" width="13" height="11" fill="#8fb3de" /><path d="M8 3v10M2 8h12" /></N><Caret /></NavButton>
              </NavBar>
            </NavBars>
          </BottomRow>

          <ViewCube>
            FRONT
            <AxisName $x={-1} $y={-13} $c="#7be08a">Y</AxisName>
            <AxisName $x={-7} $y={40} $c="#5a50dc">Z</AxisName>
            <AxisName $x={46} $y={34} $c="#ea6a70">X</AxisName>
          </ViewCube>
        </Viewport>

        <Timeline>
          <Playback>
            {[
              ['Go to start', 'M1.500 2v10M12 2v10L4 7z'],
              ['Step back', 'M9 2v10L1 7zM11.500 4v6'],
              ['Play', 'M2 1v12l10-6z'],
              ['Step forward', 'M5 2v10l8-5zM2.500 4v6'],
              ['Go to end', 'M2 2v10l8-5zM12 2v10'],
            ].map(([name, d]) => (
              <IconButton key={name} aria-label={name}>
                <svg width="14" height="14" viewBox="0 0 14 14"><path d={d} fill="#444" stroke="#444" strokeWidth="1.100" /></svg>
              </IconButton>
            ))}
          </Playback>
          <History>
            <svg width="24" height="32" viewBox="0 0 24 32" role="img" aria-label="Sketch1 feature">
              <g transform="translate(0 9)">
                <rect x="1" y="1" width="13" height="13" fill="#eef1f6" stroke="#2e4a78" strokeWidth="1.400" />
                <path d="M4 4v7h7" fill="none" stroke="#222" strokeWidth="1.300" />
                <path d="M5 10.500l1.200-3L12 1.500l2 1.800L8.500 9.300z" fill="#f1cc34" stroke="#7b6516" strokeWidth=".6" />
              </g>
              <path d="M12.500 4h10v3l-4 4v20h-1.700V11l-4.300-4z" fill="#555" />
              <path d="M8.500 26v5" stroke="#666" strokeWidth="1.600" />
            </svg>
          </History>
          <IconButton aria-label="Timeline settings">
            <svg width="14" height="14" viewBox="0 0 14 14" fill="none" stroke="#4a4a4a">
              <circle cx="7" cy="7" r="4.200" strokeWidth="1.400" /><circle cx="7" cy="7" r="5.600" strokeWidth="1.800" strokeDasharray="2.200 2.200" /><circle cx="7" cy="7" r="1.600" />
            </svg>
          </IconButton>
        </Timeline>
      </AppWindow>

      <Gutter $w={70} $top={164}>
        <svg width="6" height="242" viewBox="0 0 6 242" aria-hidden>
          <rect width="6" height="242" fill="#262b32" />
          <rect width="6" height="26" fill="#cfd1d3" />
          <path d="M6 11q-4 3 0 6M6 41q-4 6 0 13" fill="none" stroke="#8a9098" strokeWidth="1.200" />
          <rect x="1" y="101" width="4" height="5" fill="#5a6068" />
          <rect y="132" width="6" height="13" fill="#d4d6d8" />
          <path d="M2 134h3v5M1 142h3" stroke="#222" fill="none" />
          <rect x="1" y="190" width="5" height="9" fill="#6c7178" />
          <circle cx="4" cy="228" r="2" fill="none" stroke="#d0d0d0" />
        </svg>
      </Gutter>
    </Desktop>
  );
}
